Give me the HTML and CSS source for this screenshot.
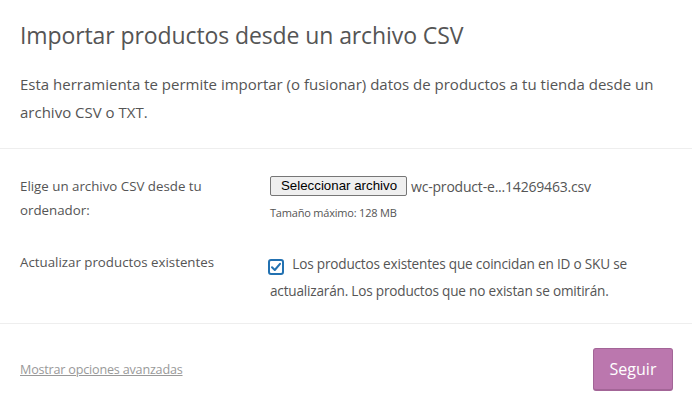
FILE: index.html
```html
<!DOCTYPE html>
<html lang="es">
<head>
    <meta charset="UTF-8">
    <meta name="viewport" content="width=device-width, initial-scale=1.0">
    <title>Importar productos</title>
    <link rel="stylesheet" href="styles.css">
</head>
<body>
    <form class="importer">
        <header class="importer-header">
            <h2>Importar productos desde un archivo CSV</h2>
            <p>Esta herramienta te permite importar (o fusionar) datos de productos a tu tienda desde un archivo CSV o TXT.</p>
        </header>

        <section class="importer-fields">
            <div class="field-row">
                <div class="field-label">Elige un archivo CSV desde tu ordenador:</div>
                <div class="field-input">
                    <div class="file-picker">
                        <span class="file-button">Seleccionar archivo</span>
                        <span class="file-name">wc-product-e...14269463.csv</span>
                    </div>
                    <small class="hint">Tamaño máximo: 128 MB</small>
                </div>
            </div>
            <div class="field-row">
                <div class="field-label">Actualizar productos existentes</div>
                <div class="field-input">
                    <label class="check">
                        <span class="check-box">
                            <svg width="12" height="12" viewBox="0 0 12 12"><path d="M2 6.3 L4.8 9 L10 2.8" fill="none" stroke="#2271b1" stroke-width="2" stroke-linecap="round" stroke-linejoin="round"/></svg>
                        </span>
                        Los productos existentes que coincidan en ID o SKU se actualizarán. Los productos que no existan se omitirán.
                    </label>
                </div>
            </div>
        </section>

        <div class="importer-actions">
            <a href="#" class="advanced-link">Mostrar opciones avanzadas</a>
            <button type="button" class="button-next">Seguir</button>
        </div>
    </form>
</body>
</html>
```

FILE: styles.css
```css
body {
    margin: 0;
    background-color: #fff;
    font-family: "Open Sans", sans-serif;
    color: #555;
}
.importer {
    width: 692px;
}
.importer-header {
    padding: 20px 20px 22px;
    border-bottom: 1px solid #eee;
}
.importer-header h2 {
    margin: 0;
    font-size: 23px;
    font-weight: 400;
    line-height: 30px;
    color: #555;
    letter-spacing: -0.1px;
}
.importer-header p {
    margin: 20px 0 0;
    font-size: 15px;
    line-height: 28px;
}
.importer-fields {
    padding: 25px 20px 19px;
    border-bottom: 1px solid #eee;
}
.field-row {
    display: flex;
    margin-bottom: 28px;
}
.field-row:last-child {
    margin-bottom: 0;
}
.field-label {
    width: 230px;
    padding-right: 20px;
    font-size: 13.3px;
    line-height: 24px;
    color: #555;
}
.field-input {
    flex: 1;
}
.file-picker {
    display: flex;
    align-items: center;
    gap: 4px;
    padding-top: 2px;
}
.file-button {
    font-family: "Liberation Sans", Arial, sans-serif;
    font-size: 13.3px;
    color: #000;
    background-color: #efefef;
    border: 1px solid #767676;
    border-radius: 2px;
    padding: 1px 9px 1px 10px;
    line-height: 16px;
}
.file-name {
    font-size: 14px;
    color: #555;
    letter-spacing: -0.2px;
}
.hint {
    display: block;
    margin-top: 9px;
    font-size: 11px;
    color: #555;
    letter-spacing: -0.2px;
}
.check {
    display: block;
    font-size: 13.6px;
    line-height: 27px;
    color: #555;
    letter-spacing: -0.2px;
}
.check-box {
    display: inline-flex;
    align-items: center;
    justify-content: center;
    width: 12px;
    height: 12px;
    border: 2px solid #2271b1;
    border-radius: 3px;
    vertical-align: -4px;
    margin-right: 5px;
    margin-left: -2px;
}
.importer-actions {
    display: flex;
    justify-content: space-between;
    align-items: center;
    padding: 24px 19px 20px 20px;
}
.advanced-link {
    font-size: 12.6px;
    color: #999;
    letter-spacing: -0.2px;
}
.button-next {
    font-family: "Open Sans", sans-serif;
    font-size: 16px;
    color: #fff;
    background-color: #bb77ae;
    border: 1px solid #a36597;
    border-bottom-width: 2px;
    border-radius: 3px;
    width: 80px;
    height: 43px;
    cursor: pointer;
}
```
